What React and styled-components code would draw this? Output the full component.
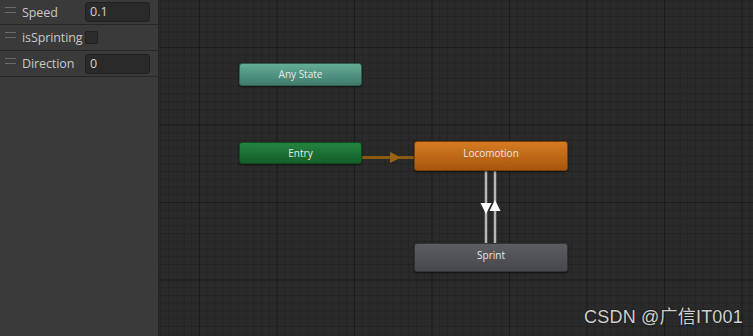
import React from "react";
import styled, { createGlobalStyle } from "styled-components";

const GlobalStyle = createGlobalStyle`
  html, body {
    margin: 0;
    padding: 0;
    background: #2a2a2a;
    overflow: hidden;
  }
`;

const Layout = styled.div`
  display: flex;
  width: 753px;
  height: 336px;
  font-family: "Open Sans", "Noto Sans", sans-serif;
`;

const Sidebar = styled.div`
  width: 158px;
  flex-shrink: 0;
  background: #3a3a3a;
  border-right: 1px solid #232323;
  display: flex;
  flex-direction: column;
`;

const ParamRow = styled.div`
  display: flex;
  align-items: center;
  height: 26px;
  border-bottom: 1px solid #272727;
  padding-left: 5px;
  box-sizing: border-box;
  &:first-child {
    height: 25px;
  }
`;

const Handle = styled.span`
  width: 11px;
  height: 4px;
  border-top: 1px solid #6a6a6a;
  border-bottom: 1px solid #6a6a6a;
  margin-right: 6px;
  margin-top: -5px;
`;

const Label = styled.span`
  width: 63px;
  color: #c8c8c8;
  font-size: 12.5px;
  letter-spacing: -0.1px;
  white-space: nowrap;
`;

const Field = styled.div`
  width: 65px;
  height: 20px;
  box-sizing: border-box;
  background: #2a2a2a;
  border: 1px solid #212121;
  border-radius: 3px;
  color: #d2d2d2;
  font-size: 12.5px;
  line-height: 18px;
  padding-left: 4px;
`;

const Checkbox = styled.div`
  width: 13px;
  height: 13px;
  box-sizing: border-box;
  background: #2c2c2c;
  border: 1px solid #202020;
  border-radius: 2px;
`;

const Canvas = styled.div`
  position: relative;
  flex: 1;
  background-color: #2a2a2a;
  background-image:
    linear-gradient(to right, #1c1c1c 1px, transparent 1px),
    linear-gradient(to bottom, #1c1c1c 1px, transparent 1px),
    linear-gradient(to right, #242424 1px, transparent 1px),
    linear-gradient(to bottom, #242424 1px, transparent 1px);
  background-size: 77.5px 77.5px, 77.5px 77.5px, 7.75px 7.75px, 7.75px 7.75px;
  background-position: 40px 0, 0 47px, 40px 0, 0 47px;
`;

const tones = {
  any: ["#63ad97", "#3f7b6b", "#2f5f52"],
  entry: ["#23843f", "#155f2a", "#0f4a20"],
  loco: ["#d77b22", "#a7560d", "#7a3f0a"],
  sprint: ["#5b5d60", "#46484b", "#333437"],
};

const StateNode = styled.div`
  position: absolute;
  box-sizing: border-box;
  border-radius: 3px;
  background: linear-gradient(
    to bottom,
    ${({ $tone }) => tones[$tone][0]},
    ${({ $tone }) => tones[$tone][1]}
  );
  border: 1px solid ${({ $tone }) => tones[$tone][2]};
  box-shadow: 0 1px 2px rgba(0, 0, 0, 0.6);
  color: #e8e8e8;
  font-size: 10px;
  display: flex;
  align-items: center;
  justify-content: center;
  padding-bottom: ${({ $tall }) => ($tall ? "6px" : "1px")};
`;

const Wires = styled.svg`
  position: absolute;
  left: 0;
  top: 0;
  pointer-events: none;
`;

const Watermark = styled.div`
  position: absolute;
  right: 10px;
  bottom: 8px;
  color: #cfcfcf;
  font-family: "Liberation Sans", "Noto Sans CJK SC", sans-serif;
  font-size: 18px;
  letter-spacing: 0.2px;
  text-shadow: 0 0 2px rgba(0, 0, 0, 0.8);
`;

const params = [
  { name: "Speed", value: "0.1" },
  { name: "isSprinting", bool: true },
  { name: "Direction", value: "0" },
];

// canvas starts at x = 159
const nodes = [
  { id: "any", label: "Any State", x: 80, y: 63, w: 123, h: 23 },
  { id: "entry", label: "Entry", x: 80, y: 142, w: 123, h: 22 },
  { id: "loco", label: "Locomotion", x: 255, y: 141, w: 154, h: 30, tall: true },
  { id: "sprint", label: "Sprint", x: 255, y: 243, w: 154, h: 29, tall: true },
];

export default function App() {
  return (
    <>
      <GlobalStyle />
      <Layout>
        <Sidebar>
          {params.map((p) => (
            <ParamRow key={p.name}>
              <Handle />
              <Label>{p.name}</Label>
              {p.bool ? <Checkbox /> : <Field>{p.value}</Field>}
            </ParamRow>
          ))}
        </Sidebar>
        <Canvas>
          <Wires width="594" height="336">
            <line x1="203" y1="157.5" x2="255" y2="157.5" stroke="#8a5a0e" strokeWidth="3" />
            <polygon points="231,152 242,157.5 231,163" fill="#9a6410" />
            <line x1="327" y1="171" x2="327" y2="243" stroke="#b8b8b8" strokeWidth="2.5" />
            <line x1="336" y1="171" x2="336" y2="243" stroke="#b8b8b8" strokeWidth="2.5" />
            <polygon points="321.5,203 332.5,203 327,214" fill="#ffffff" />
            <polygon points="330.5,211 341.5,211 336,200" fill="#ffffff" />
          </Wires>
          {nodes.map((n) => (
            <StateNode
              key={n.id}
              $tone={n.id}
              $tall={n.tall}
              style={{ left: n.x, top: n.y, width: n.w, height: n.h }}
            >
              {n.label}
            </StateNode>
          ))}
          <Watermark>CSDN @广信IT001</Watermark>
        </Canvas>
      </Layout>
    </>
  );
}
